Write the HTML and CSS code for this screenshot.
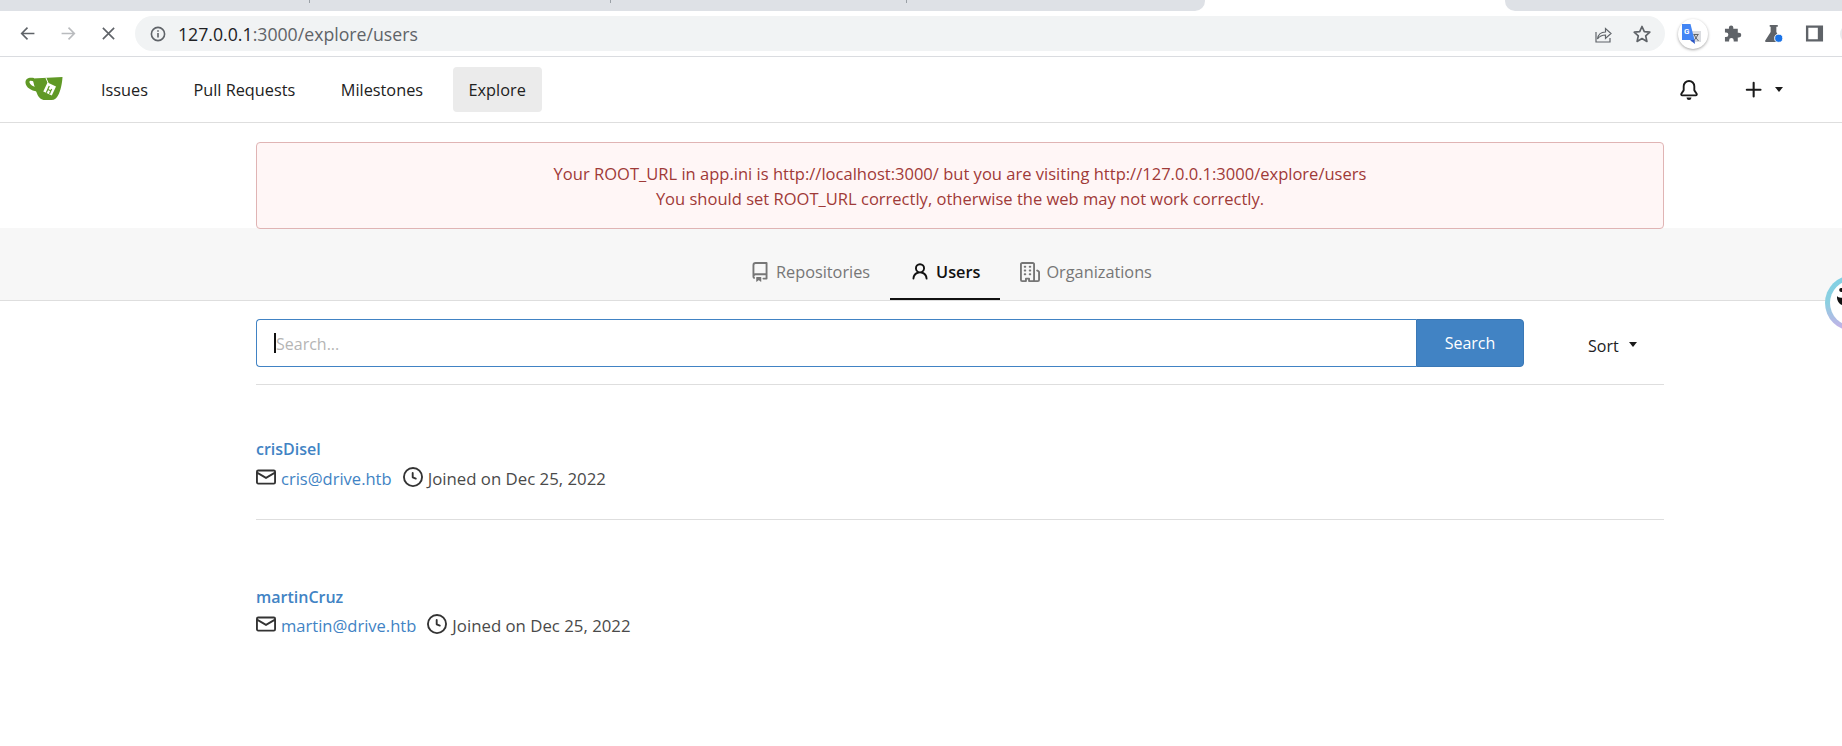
FILE: index.html
```html
<!DOCTYPE html>
<html lang="en">
<head>
<meta charset="utf-8">
<title>Users - Gitea</title>
<link rel="stylesheet" href="styles.css">
</head>
<body>
<header class="browser">
  <div class="tabstrip">
    <div class="strip strip-left"><i class="tick tick-a"></i><i class="tick tick-b"></i><i class="tick tick-c"></i></div>
    <div class="active-tab"></div>
    <div class="strip strip-right"></div>
  </div>
  <div class="toolbar">
    <svg class="tb-nav" viewBox="0 0 16 16"><path d="M14.5 8H2.5M8 2.5L2.5 8 8 13.5" fill="none" stroke="#5f6368" stroke-width="1.5"/></svg>
    <svg class="tb-nav tb-fwd" viewBox="0 0 16 16"><path d="M1.5 8h12M8 2.5L13.5 8 8 13.5" fill="none" stroke="#b9bbbe" stroke-width="1.5"/></svg>
    <svg class="tb-nav tb-stop" viewBox="0 0 16 16"><path d="M2 2l12 12M14 2L2 14" fill="none" stroke="#5f6368" stroke-width="1.7"/></svg>
    <div class="omnibox">
      <svg class="omni-info" viewBox="0 0 16 16"><circle cx="8" cy="8" r="6.6" fill="none" stroke="#5f6368" stroke-width="1.6"/><path d="M7.2 7h1.6v4.6H7.2zM7.2 4.2h1.6v1.6H7.2z" fill="#5f6368"/></svg>
      <div class="omni-url"><span class="omni-host">127.0.0.1</span>:3000/explore/users</div>
      <svg class="omni-share" viewBox="0 0 20 20"><path d="M2 8v10h14v-4M3.500 15c.6-4.500 4-7 8-7V4.500l5.500 5-5.500 5V11c-3.500 0-6 1.200-8 4z" fill="none" stroke="#5f6368" stroke-width="1.200"/></svg>
      <svg class="omni-star" viewBox="0 0 20 20"><path d="M10 2.500l2.300 5.100 5.500.6-4.100 3.700 1.200 5.500L10 14.600l-4.900 2.800 1.200-5.500-4.100-3.700 5.500-.6z" fill="none" stroke="#5f6368" stroke-width="1.700" stroke-linejoin="round"/></svg>
    </div>
    <div class="ext-translate">
      <svg viewBox="0 0 30 30"><path d="M13 12h10v11H13z" fill="#dadce0"/><path d="M15.500 15.500h5M16 15.500l2 3.500 2-3.500M15.500 22l2.500-3 2.500 3" fill="none" stroke="#5f6368" stroke-width="1"/><path d="M4 5h8.500l4 16H4z" fill="#4285f4"/><path d="M12 21h4.500l.5 4z" fill="#2a56c6"/><text x="6" y="15" class="ext-g">G</text></svg>
    </div>
    <svg class="tb-ext" viewBox="0 0 20 20"><path d="M7.500 1.500a2.300 2.300 0 0 1 2.300 2.300V5h4.700v4.200h1.200a2.500 2.500 0 0 1 0 5h-1.200v4.300h-4.300v-1.300a2.400 2.400 0 0 0-4.800 0v1.300H1v-4.800h1.200a2.400 2.400 0 0 0 0-4.800H1V5h4.200V3.800a2.300 2.300 0 0 1 2.300-2.300z" fill="#5f6368"/></svg>
    <svg class="tb-ext tb-flask" viewBox="0 0 20 20"><path d="M6 1h8.500v1.800h-1.500v5.500L17.500 17a1.200 1.200 0 0 1-1 2H2.500a1.200 1.200 0 0 1-1-2L7 8.300V2.800H6z" fill="#5f6368"/><circle cx="15.500" cy="15" r="4.300" fill="#1a73e8" stroke="#fff" stroke-width="1"/></svg>
    <svg class="tb-ext tb-panel" viewBox="0 0 20 20"><path d="M1 1.500h18v17H1zM3.500 4v12H13.500V4z" fill="#5f6368" fill-rule="evenodd"/></svg>
    <div class="tb-avatar"></div>
  </div>
</header>

<nav class="topnav">
  <svg class="logo" viewBox="0 0 38 26"><path d="M9 3C4 2 0 3.500.5 8 1 12.500 6 15.500 12 16.500L11.500 12.500C8 11.500 5 9.500 4.500 7.500 4 5.500 6 5.500 9 6.500z" fill="#609926"/><path d="M7.500 3.500L37.500 2c-.3 6-1.800 14-4.500 18.500-1.300 2.500-3.300 4.500-6.500 4.500H20c-4 0-6.500-2.500-8-6.500C10 14 8.500 8 7.500 3.500z" fill="#609926"/><path d="M21 3l2.500 6" stroke="#fff" stroke-width="1"/><path d="M22.500 7.500l8.500 4-4.200 9-8.500-4z" fill="#fff"/><path d="M24.300 11l-3 6.800M22.800 14.500l3 1.300-1.300 3M25.800 15.800l.9-1.800" fill="none" stroke="#609926" stroke-width="1.200"/></svg>
  <a class="nav-item">Issues</a>
  <a class="nav-item">Pull Requests</a>
  <a class="nav-item">Milestones</a>
  <a class="nav-item nav-active">Explore</a>
  <div class="nav-right">
    <svg class="oct nav-bell" viewBox="0 0 16 16"><path d="M8 16a2 2 0 001.985-1.750c.017-.137-.097-.250-.235-.250h-3.500c-.138 0-.252.113-.235.250A2 2 0 008 16z"/><path d="M8 1.500A3.500 3.500 0 004.500 5v2.947c0 .346-.102.683-.294.970l-1.703 2.556a.018.018 0 00-.003.010l.001.006c0 .002.002.004.004.006a.017.017 0 00.006.004l.007.001h10.964l.007-.001a.018.018 0 00.006-.004.016.016 0 00.004-.006l.001-.007a.017.017 0 00-.003-.010l-1.703-2.554a1.750 1.750 0 01-.294-.970V5A3.500 3.500 0 008 1.500zM3 5a5 5 0 0110 0v2.947c0 .050.015.098.042.139l1.703 2.555A1.518 1.518 0 0113.482 13H2.518a1.518 1.518 0 01-1.263-2.360l1.703-2.554A.250.250 0 003 7.947V5z"/></svg>
    <svg class="oct nav-plus" viewBox="0 0 16 16"><path d="M7.750 2a.750.750 0 01.750.750V7h4.250a.750.750 0 110 1.500H8.500v4.250a.750.750 0 11-1.500 0V8.500H2.750a.750.750 0 010-1.500H7V2.750A.750.750 0 017.750 2z"/></svg>
    <span class="caret nav-caret"></span>
  </div>
</nav>

<main>
  <div class="alert-wrap">
    <div class="alert">
      <p>Your ROOT_URL in app.ini is http://localhost:3000/ but you are visiting http://127.0.0.1:3000/explore/users</p>
      <p>You should set ROOT_URL correctly, otherwise the web may not work correctly.</p>
    </div>
  </div>

  <div class="tabs">
    <a class="tab">
      <svg class="oct" viewBox="0 0 16 16"><path d="M2 2.500A2.500 2.500 0 014.500 0h8.750a.750.750 0 01.750.750v12.500a.750.750 0 01-.750.750h-2.500a.750.750 0 110-1.500h1.750v-2h-8a1 1 0 00-.714 1.700.750.750 0 01-1.072 1.050A2.495 2.495 0 012 11.500v-9zm10.500-1V9h-8c-.356 0-.694.074-1 .208V2.500a1 1 0 011-1h8zM5 12.250v3.250a.250.250 0 00.400.200l1.450-1.087a.250.250 0 01.300 0L8.600 15.700a.250.250 0 00.400-.200v-3.250a.250.250 0 00-.250-.250h-3.500a.250.250 0 00-.250.250z" fill-rule="evenodd"/></svg>
      Repositories
    </a>
    <a class="tab tab-active">
      <svg class="oct" viewBox="0 0 16 16"><path d="M10.500 5a2.500 2.500 0 11-5 0 2.500 2.500 0 015 0zm.061 3.073a4 4 0 10-5.123 0 6.004 6.004 0 00-3.431 5.142.750.750 0 001.498.070 4.500 4.500 0 018.990 0 .750.750 0 101.498-.070 6.005 6.005 0 00-3.432-5.142z" fill-rule="evenodd"/></svg>
      Users
    </a>
    <a class="tab">
      <svg class="oct" viewBox="0 0 16 16"><path d="M1.500 14.250c0 .138.112.250.250.250H4v-1.250a.750.750 0 01.750-.750h2.500a.750.750 0 01.750.750v1.250h2.250a.250.250 0 00.250-.250V1.750a.250.250 0 00-.250-.250h-8.500a.250.250 0 00-.250.250v12.500zM1.750 16A1.750 1.750 0 010 14.250V1.750C0 .784.784 0 1.750 0h8.500C11.216 0 12 .784 12 1.750v12.500c0 .085-.006.168-.018.250h2.268a.250.250 0 00.250-.250V8.285a.250.250 0 00-.111-.208l-1.055-.703a.750.750 0 11.832-1.248l1.055.703c.487.325.779.871.779 1.456v5.965A1.750 1.750 0 0114.250 16h-3.500a.750.750 0 01-.197-.026c-.099.017-.200.026-.303.026h-3a.750.750 0 01-.750-.750V14h-1v1.250a.750.750 0 01-.750.750h-3zM3 3.750A.750.750 0 013.750 3h.500a.750.750 0 010 1.500h-.500A.750.750 0 013 3.750zM3.750 6a.750.750 0 000 1.500h.500a.750.750 0 000-1.500h-.500zM3 9.750A.750.750 0 013.750 9h.500a.750.750 0 010 1.500h-.500A.750.750 0 013 9.750zM7.750 9a.750.750 0 000 1.500h.500a.750.750 0 000-1.500h-.500zM7 6.750A.750.750 0 017.750 6h.500a.750.750 0 010 1.500h-.500A.750.750 0 017 6.750zM7.750 3a.750.750 0 000 1.500h.500a.750.750 0 000-1.500h-.500z" fill-rule="evenodd"/></svg>
      Organizations
    </a>
  </div>

  <div class="content">
    <form class="search-row">
      <div class="search-box">
        <input class="search-input" type="text" placeholder="Search...">
        <span class="text-caret"></span>
        <button class="search-btn" type="button">Search</button>
      </div>
      <div class="sort">Sort <span class="caret sort-caret"></span></div>
    </form>

    <ul class="users">
      <li class="user">
        <a class="user-name">crisDisel</a>
        <div class="user-meta">
          <svg class="oct" viewBox="0 0 16 16"><path d="M1.750 2A1.750 1.750 0 000 3.750v.736a.750.750 0 000 .027v7.737C0 13.216.784 14 1.750 14h12.500A1.750 1.750 0 0016 12.250v-8.500A1.750 1.750 0 0014.250 2H1.750zM14.500 4.070v-.320a.250.250 0 00-.250-.250H1.750a.250.250 0 00-.250.250v.320L8 7.880l6.500-3.810zm-13 1.740v6.441c0 .138.112.250.250.250h12.500a.250.250 0 00.250-.250V5.809L8.380 9.397a.750.750 0 01-.760 0L1.500 5.809z" fill-rule="evenodd"/></svg>
          <a class="user-mail">cris@drive.htb</a>
          <svg class="oct oct-clock" viewBox="0 0 16 16"><path d="M1.500 8a6.500 6.500 0 1113 0 6.500 6.500 0 01-13 0zM8 0a8 8 0 100 16A8 8 0 008 0zm.500 4.750a.750.750 0 00-1.500 0v3.500a.750.750 0 00.471.696l2.500 1a.750.750 0 00.557-1.392L8.500 7.742V4.750z" fill-rule="evenodd"/></svg>
          <span class="user-joined">Joined on Dec 25, 2022</span>
        </div>
      </li>
      <li class="user">
        <a class="user-name">martinCruz</a>
        <div class="user-meta">
          <svg class="oct" viewBox="0 0 16 16"><path d="M1.750 2A1.750 1.750 0 000 3.750v.736a.750.750 0 000 .027v7.737C0 13.216.784 14 1.750 14h12.500A1.750 1.750 0 0016 12.250v-8.500A1.750 1.750 0 0014.250 2H1.750zM14.500 4.070v-.320a.250.250 0 00-.250-.250H1.750a.250.250 0 00-.250.250v.320L8 7.880l6.500-3.810zm-13 1.740v6.441c0 .138.112.250.250.250h12.500a.250.250 0 00.250-.250V5.809L8.380 9.397a.750.750 0 01-.760 0L1.500 5.809z" fill-rule="evenodd"/></svg>
          <a class="user-mail">martin@drive.htb</a>
          <svg class="oct oct-clock" viewBox="0 0 16 16"><path d="M1.500 8a6.500 6.500 0 1113 0 6.500 6.500 0 01-13 0zM8 0a8 8 0 100 16A8 8 0 008 0zm.500 4.750a.750.750 0 00-1.500 0v3.500a.750.750 0 00.471.696l2.500 1a.750.750 0 00.557-1.392L8.500 7.742V4.750z" fill-rule="evenodd"/></svg>
          <span class="user-joined">Joined on Dec 25, 2022</span>
        </div>
      </li>
    </ul>
  </div>
</main>

<div class="float-widget">
  <svg class="float-mark" viewBox="0 0 6 17"><path d="M4 0h2v4H4.500A2 2 0 0 1 4 0zM0 8c1 1.500 3 2 6 1.500V17C3 17 -.5 13 0 8z" fill="#111"/></svg>
</div>
</body>
</html>
```
FILE: styles.css
```css
* { box-sizing: border-box; }
html, body { height: 100%; }
body {
  margin: 0;
  background: #fff;
  color: #212121;
  font-family: "Open Sans", "Noto Sans", sans-serif;
  font-size: 15px;
  overflow: hidden;
}
p { margin: 0; }
a { text-decoration: none; }

/* browser chrome */
.browser { height: 57px; border-bottom: 1px solid #dadce0; }
.tabstrip { display: flex; height: 11px; }
.strip { background: #dee1e6; position: relative; }
.strip-left { width: 1205px; border-bottom-right-radius: 10px; }
.active-tab { width: 300px; }
.strip-right { flex: 1; border-bottom-left-radius: 10px; }
.tick { position: absolute; top: 0; width: 1px; height: 3px; background: #9aa0a6; }
.tick-a { left: 309px; }
.tick-b { left: 610px; }
.tick-c { left: 906px; }
.toolbar { display: flex; align-items: center; height: 45px; padding: 0 0 0 19px; }
.tb-nav { width: 17px; height: 17px; flex: none; }
.tb-fwd { margin-left: 24px; }
.tb-stop { margin-left: 24px; width: 15px; height: 15px; }
.omnibox {
  display: flex; align-items: center; flex: none;
  width: 1530px; height: 35px; margin: 0 0 0 19px; padding: 0 13px 0 15px;
  background: #f1f3f4; border-radius: 18px;
}
.omni-info { width: 16px; height: 16px; flex: none; }
.omni-url { margin-left: 12px; flex: 1; color: #5f6368; font-size: 17.700px; }
.omni-host { color: #202124; }
.omni-share { width: 20px; height: 20px; margin-right: 18px; }
.omni-star { width: 20px; height: 20px; }
.ext-translate {
  width: 30px; height: 30px; margin-left: 13px; border-radius: 50%; background: #fff;
  box-shadow: 0 1px 3px rgba(0,0,0,.35); flex: none;
}
.ext-translate svg { display: block; width: 30px; height: 30px; }
.ext-g { font: 700 8px "Roboto", sans-serif; fill: #fff; }
.tb-ext { width: 19px; height: 19px; margin-left: 16px; flex: none; }
.tb-flask { margin-left: 21px; }
.tb-panel { margin-left: 22px; }
.tb-avatar { width: 20px; height: 20px; margin-left: 16px; border-radius: 50%; background: #e8eaed; flex: none; }

/* app nav */
.topnav {
  display: flex; align-items: center;
  height: 66px; padding: 0 0 0 25px;
  border-bottom: 1px solid #dedede;
}
.logo { width: 38px; height: 26px; margin: -3px 22px 0 0; flex: none; }
.nav-item {
  display: flex; align-items: center;
  height: 45px; padding: 0 16px; margin-right: 13.500px;
  border-radius: 4px; color: #212121; font-size: 16.300px;
}
.nav-active { background: #ebebeb; }
.nav-right { margin-left: auto; display: flex; align-items: center; padding-right: 59px; }
.oct { width: 20px; height: 20px; flex: none; fill: #333; }
.nav-bell { fill: #1a1a1a; }
.nav-plus { width: 22px; height: 22px; margin-left: 44px; fill: #1a1a1a; }
.caret {
  display: inline-block; width: 0; height: 0;
  border-left: 4.500px solid transparent; border-right: 4.500px solid transparent; border-top: 5px solid #1a1a1a;
}
.nav-caret { margin-left: 10px; }

/* alert */
.alert-wrap { padding: 19px 178px 0 256px; position: relative; z-index: 1; margin-bottom: -1px; }
.alert {
  height: 87px; padding: 18px 16px 0;
  background: #fff6f6; border: 1px solid #e0b4b4; border-radius: 4px;
  color: #9f3a38; text-align: center; font-size: 16.550px; line-height: 25px;
}

/* explore tabs */
.tabs {
  display: flex; align-items: flex-end;
  height: 73px; padding-left: 730px;
  background: #f7f7f7; border-bottom: 1px solid #dedede;
}
.tab {
  display: flex; align-items: center; gap: 6px;
  height: 46px; padding: 0 20px 8px;
  color: #767676; font-size: 16.300px;
  border-bottom: 2px solid transparent;
}
.tab .oct { fill: #767676; }
.tab-active { color: #111; font-weight: 600; border-bottom-color: #111; }
.tab-active .oct { fill: #111; }

/* content */
.content { padding: 18px 178px 0 256px; }
.search-row {
  display: flex; align-items: center;
  padding-bottom: 17px; border-bottom: 1px solid #dedede;
}
.search-box { display: flex; position: relative; width: 1268px; height: 48px; }
.search-input {
  flex: 1; min-width: 0; padding: 2px 16px 0 19px;
  border: 1px solid #4183c4; border-right: 0; border-radius: 4px 0 0 4px; outline: 0;
  font: inherit; font-size: 16px; color: #212121; caret-color: transparent;
}
.search-input::placeholder { color: #b5b5b5; }
.text-caret { position: absolute; left: 18px; top: 14px; width: 2px; height: 20px; background: #111; }
.search-btn {
  width: 108px; border: 1px solid #3a78b6; border-radius: 0 4px 4px 0;
  background: #4183c4; color: #fff; font: inherit; font-size: 16px;
}
.sort { display: flex; align-items: center; margin: 6px 0 0 64px; font-size: 16px; color: #212121; }
.sort-caret { margin: -3px 0 0 10px; }

.users { list-style: none; margin: 0; padding: 0; }
.user { height: 135px; padding-top: 52px; border-bottom: 1px solid #dedede; }
.user:last-child { border-bottom: 0; padding-top: 65px; }
.user:last-child .user-meta { margin-top: 4px; }
.user-name { display: block; color: #4183c4; font-weight: 600; font-size: 16px; line-height: 24px; }
.user-meta { display: flex; align-items: center; height: 24px; margin-top: 5px; color: #4a4a4a; font-size: 16.550px; }
.user-mail { margin-left: 5px; color: #4183c4; }
.oct-clock { margin: -2px 5px 0 11px; }
.user-joined { font-size: 16.800px; }
.user-meta > .oct:first-child { margin-top: -3px; }

/* floating extension widget */
.float-widget {
  position: absolute; left: 1825px; top: 275px;
  width: 56px; height: 56px; border-radius: 50%; padding: 5px;
  background: linear-gradient(180deg, #7fd0e4 0%, #8ccfe0 50%, #c9aee8 100%);
}
.float-widget::before {
  content: ""; display: block; width: 46px; height: 46px; border-radius: 50%; background: #fff;
}
.float-mark { position: absolute; left: 12px; top: 13px; width: 6px; height: 17px; }
```
